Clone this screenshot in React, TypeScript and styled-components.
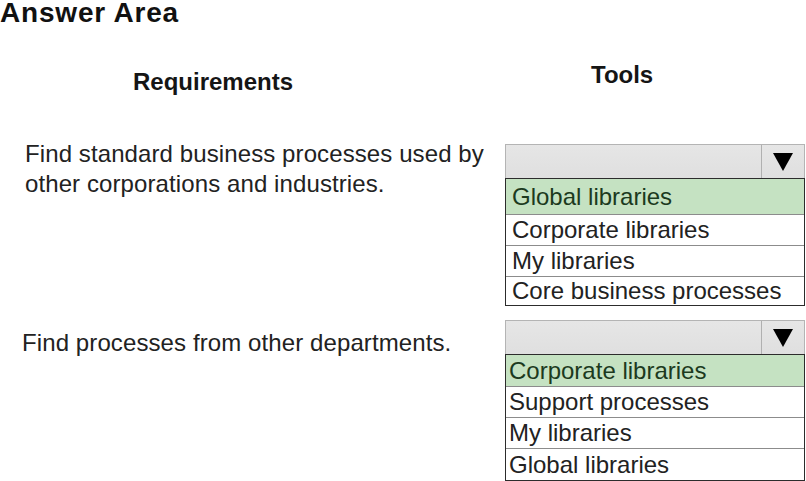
import React from "react";
import styled, { createGlobalStyle } from "styled-components";

const Global = createGlobalStyle`
  html, body { margin: 0; padding: 0; background: #ffffff; }
  body { font-family: "Liberation Sans", Arial, sans-serif; color: #222222; }
`;

const Page = styled.div`
  width: 806px;
  height: 481px;
  overflow: hidden;
  background: #ffffff;
`;

const Title = styled.h1`
  margin: 0;
  padding-top: 1px;
  font-size: 28px;
  line-height: 24px;
  letter-spacing: 0.8px;
  font-weight: 700;
  color: #111111;
`;

const HeaderRow = styled.div`
  display: grid;
  grid-template-columns: 505px 300px;
  align-items: start;
`;

const HeaderCell = styled.div<{ $top: number; $left: number }>`
  padding-top: ${(p) => p.$top}px;
  padding-left: ${(p) => p.$left}px;
  font-size: 24px;
  line-height: 28px;
  font-weight: 700;
  color: #151515;
`;

const Row = styled.div<{ $mt: number }>`
  display: grid;
  grid-template-columns: 505px 300px;
  align-items: start;
  margin-top: ${(p) => p.$mt}px;
`;

const Requirement = styled.div<{ $top: number; $left: number }>`
  padding-top: ${(p) => p.$top}px;
  padding-left: ${(p) => p.$left}px;
  font-size: 24px;
  line-height: 30px;
  letter-spacing: 0.1px;
  color: #222222;
`;

const Dropdown = styled.div<{ $top: number }>`
  margin-top: ${(p) => p.$top}px;
  display: flex;
  flex-direction: column;
  width: 300px;
`;

const Select = styled.div`
  display: flex;
  height: 34px;
  box-sizing: border-box;
  border: 1px solid #b4b4b4;
  border-bottom: none;
  background: linear-gradient(#e6e6e6, #dfdfdf);
`;

const SelectValue = styled.div`
  flex: 1;
`;

const ArrowBox = styled.div`
  width: 42px;
  border-left: 1px solid #b0b0b0;
  display: flex;
  align-items: center;
  justify-content: center;
`;

const List = styled.div`
  border: 1px solid #2c2c2c;
  display: flex;
  flex-direction: column;
  background: #ffffff;
`;

const Option = styled.div<{ $h: number; $selected: boolean; $left: number }>`
  height: ${(p) => p.$h}px;
  line-height: ${(p) => p.$h}px;
  padding-left: ${(p) => p.$left}px;
  font-size: 24px;
  white-space: nowrap;
  background: ${(p) => (p.$selected ? "#c5e2c2" : "#ffffff")};
  color: ${(p) => (p.$selected ? "#1c3a1e" : "#222222")};
  & + & {
    border-top: 1px solid #8c8c8c;
  }
`;

type Opt = { label: string; h: number; selected?: boolean };

const Arrow = () => (
  <svg width="20" height="18" viewBox="0 0 20 18">
    <polygon points="0,0 20,0 10,18" fill="#000000" />
  </svg>
);

const Drop = ({ top, options, left }: { top: number; options: Opt[]; left: number }) => (
  <Dropdown $top={top}>
    <Select>
      <SelectValue />
      <ArrowBox>
        <Arrow />
      </ArrowBox>
    </Select>
    <List>
      {options.map((o) => (
        <Option key={o.label} $h={o.h} $selected={!!o.selected} $left={left}>
          {o.label}
        </Option>
      ))}
    </List>
  </Dropdown>
);

export default function App() {
  return (
    <Page>
      <Global />
      <Title>Answer Area</Title>
      <HeaderRow>
        <HeaderCell $top={43} $left={133}>Requirements</HeaderCell>
        <HeaderCell $top={36} $left={86}>Tools</HeaderCell>
      </HeaderRow>
      <Row $mt={43}>
        <Requirement $top={0} $left={25}>
          Find standard business processes used by
          <br />
          other corporations and industries.
        </Requirement>
        <Drop
          top={5}
          left={6}
          options={[
            { label: "Global libraries", h: 35, selected: true },
            { label: "Corporate libraries", h: 30 },
            { label: "My libraries", h: 30 },
            { label: "Core business processes", h: 28 },
          ]}
        />
      </Row>
      <Row $mt={14}>
        <Requirement $top={8} $left={22}>
          Find processes from other departments.
        </Requirement>
        <Drop
          top={0}
          left={3}
          options={[
            { label: "Corporate libraries", h: 31, selected: true },
            { label: "Support processes", h: 30 },
            { label: "My libraries", h: 30 },
            { label: "Global libraries", h: 31 },
          ]}
        />
      </Row>
    </Page>
  );
}
